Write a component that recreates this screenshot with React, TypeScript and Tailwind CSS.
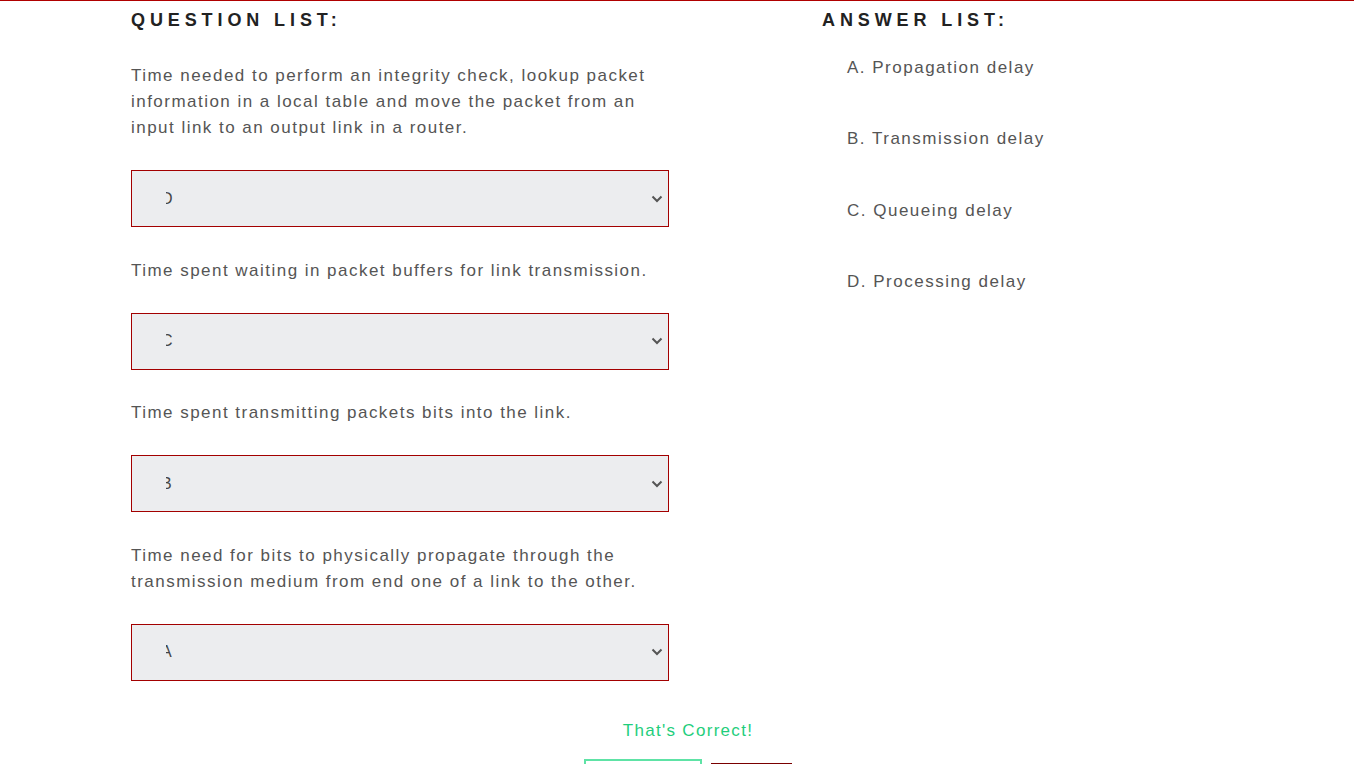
const QUESTIONS = [
  {
    text: "Time needed to perform an integrity check, lookup packet information in a local table and move the packet from an input link to an output link in a router.",
    pick: "D",
  },
  { text: "Time spent waiting in packet buffers for link transmission.", pick: "C" },
  { text: "Time spent transmitting packets bits into the link.", pick: "B" },
  {
    text: "Time need for bits to physically propagate through the transmission medium from end one of a link to the other.",
    pick: "A",
  },
];

const ANSWERS = ["A. Propagation delay", "B. Transmission delay", "C. Queueing delay", "D. Processing delay"];

function FakeSelect({ value }: { value: string }) {
  return (
    <div className="mt-[29px] flex h-[57px] w-[538px] items-center border border-[#a30000] bg-[#ecedef] pl-[34px] pr-[5px]">
      {/* the chosen letter is half cut off in the original */}
      <span className="inline-block w-[7px] overflow-hidden text-[16px] text-[#444]">
        <span className="-ml-[5px] inline-block">{value}</span>
      </span>
      <svg className="ml-auto" width="12" height="8" viewBox="0 0 12 8" fill="none">
        <path d="M1.5 1.5 6 6l4.5-4.5" stroke="#555" strokeWidth="2" />
      </svg>
    </div>
  );
}

export default function App() {
  return (
    <div className="min-h-[764px] border-t border-[#b00000] bg-white font-['Liberation_Sans',Arial,sans-serif]">
      <div className="flex pl-[131px]">
        {/* Questions */}
        <div className="w-[538px]">
          <h2 className="pt-[6px] text-[18px] font-bold leading-[26px] tracking-[4.9px] text-[#222]">
            QUESTION LIST:
          </h2>
          {QUESTIONS.map((q, i) => (
            <div key={i} className={i === 0 ? "mt-[30px]" : "mt-[30.5px]"}>
              <p className="text-[17px] leading-[26px] tracking-[1.47px] text-[#555]">{q.text}</p>
              <FakeSelect value={q.pick} />
            </div>
          ))}
        </div>

        {/* Answers */}
        <div className="ml-[153px]">
          <h2 className="pt-[6px] text-[18px] font-bold leading-[26px] tracking-[4.9px] text-[#222]">
            ANSWER LIST:
          </h2>
          <ul className="mt-[22px] pl-[25px]">
            {ANSWERS.map((a) => (
              <li key={a} className="h-[71.3px] text-[17px] leading-[26px] tracking-[1.5px] text-[#555]">
                {a}
              </li>
            ))}
          </ul>
        </div>
      </div>

      <div className="ml-[131px] w-[1114px] pt-[37px] text-center">
        <p className="text-[17px] leading-[26px] tracking-[1.3px] text-[#1fce7c]">That's Correct!</p>
        <div className="mt-[15px] flex items-start justify-center gap-[9px]">
          <button className="h-[40px] w-[118px] border-2 border-[#5ee3a6]" />
          <button className="mt-[4px] h-[36px] w-[81px] border-t border-[#7a0000]" />
        </div>
      </div>
    </div>
  );
}
